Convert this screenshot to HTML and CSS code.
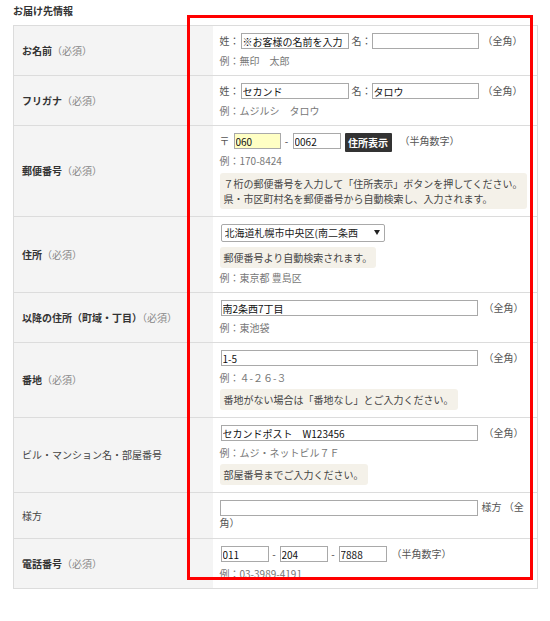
FILE: index.html
```html
<!DOCTYPE html>
<html lang="ja">
<head>
<meta charset="utf-8">
<title>お届け先情報</title>
<link rel="stylesheet" href="styles.css">
</head>
<body>
<div class="page">
  <h2 class="title">お届け先情報</h2>
  <table class="form">
    <colgroup><col class="c1"><col></colgroup>
    <tr>
      <th><b>お名前</b><span class="req">（必須）</span></th>
      <td>
        <div class="line"><span>姓：</span><input class="txt first w108" value="※お客様の名前を入力"><span class="sp">名：</span><input class="txt w107"><span class="hint h4">（全角）</span></div>
        <div class="ex">例：無印　太郎</div>
      </td>
    </tr>
    <tr>
      <th><b>フリガナ</b><span class="req">（必須）</span></th>
      <td>
        <div class="line"><span>姓：</span><input class="txt first w108" value="セカンド"><span class="sp">名：</span><input class="txt w107" value="タロウ"><span class="hint h4">（全角）</span></div>
        <div class="ex">例：ムジルシ　タロウ</div>
      </td>
    </tr>
    <tr>
      <th><b>郵便番号</b><span class="req">（必須）</span></th>
      <td>
        <div class="line"><span>〒</span><input class="txt zip yellow" value="060"><span class="dash d12">-</span><input class="txt w48" value="0062"><button class="btn" type="button">住所表示</button><span class="hint h8">（半角数字）</span></div>
        <div class="ex">例：170-8424</div>
        <div class="note mt5">７桁の郵便番号を入力して「住所表示」ボタンを押してください。<br>県・市区町村名を郵便番号から自動検索し、入力されます。</div>
      </td>
    </tr>
    <tr>
      <th><b>住所</b><span class="req">（必須）</span></th>
      <td>
        <div class="selwrap">
          <select class="sel"><option>北海道札幌市中央区(南二条西</option></select>
          <svg class="arrow" width="6" height="5" viewBox="0 0 6 5"><polygon points="0,0 6,0 3,5" fill="#222"/></svg>
        </div>
        <div class="note mt5">郵便番号より自動検索されます。</div>
        <div class="ex mt3">例：東京都 豊島区</div>
      </td>
    </tr>
    <tr>
      <th><b>以降の住所（町域・丁目）</b><span class="req">（必須）</span></th>
      <td>
        <div class="line"><input class="txt first w257" value="南2条西7丁目"><span class="hint h6">（全角）</span></div>
        <div class="ex">例：東池袋</div>
      </td>
    </tr>
    <tr>
      <th><b>番地</b><span class="req">（必須）</span></th>
      <td>
        <div class="line"><input class="txt first w257" value="1-5"><span class="hint h6">（全角）</span></div>
        <div class="ex">例：４-２６-３</div>
        <div class="note mt4">番地がない場合は「番地なし」とご入力ください。</div>
      </td>
    </tr>
    <tr>
      <th><span class="plain">ビル・マンション名・部屋番号</span></th>
      <td>
        <div class="line"><input class="txt first w257" value="セカンドポスト　W123456"><span class="hint h6">（全角）</span></div>
        <div class="ex">例：ムジ・ネットビル７Ｆ</div>
        <div class="note mt4">部屋番号までご入力ください。</div>
      </td>
    </tr>
    <tr>
      <th><span class="plain">様方</span></th>
      <td class="pb8">
        <div class="flow"><input class="txt w258"><span class="after">様方 （全角）</span></div>
      </td>
    </tr>
    <tr>
      <th><b>電話番号</b><span class="req">（必須）</span></th>
      <td>
        <div class="line"><input class="txt first w48" value="011"><span class="dash d11">-</span><input class="txt w48" value="204"><span class="dash d11">-</span><input class="txt w48" value="7888"><span class="hint h5">（半角数字）</span></div>
        <div class="ex">例：03-3989-4191</div>
      </td>
    </tr>
  </table>
  <div class="highlight"></div>
</div>
</body>
</html>
```

FILE: styles.css
```css
* { box-sizing: border-box; }
html, body { margin: 0; padding: 0; background: #fff; }
body {
  font-family: "Noto Sans CJK JP", "Noto Sans", sans-serif;
  font-size: 10px;
  color: #333;
  width: 550px;
}
.page { position: relative; padding: 4px 12px 0 13px; }
.title {
  margin: 0 0 7px;
  font-size: 10px;
  line-height: 14px;
  font-weight: bold;
  color: #333;
}
.form {
  width: 525px;
  border-collapse: collapse;
  table-layout: fixed;
  border: 1px solid #dcdcdc;
}
.c1 { width: 199px; }
.form th {
  background: #f4f4f4;
  text-align: left;
  font-weight: normal;
  padding: 0 0 0 8px;
  vertical-align: middle;
  border-bottom: 1px solid #dcdcdc;
  line-height: 14px;
  color: #333;
}
.form th b { font-weight: bold; color: #333; }
.form th .plain { color: #444; }
.req { color: #888; }
.form td {
  padding: 7px 8px 7px 7px;
  vertical-align: top;
  border-bottom: 1px solid #dcdcdc;
  background: #fff;
  color: #555;
}
.form td.pb8 { padding-bottom: 8px; }
.line {
  display: flex;
  align-items: flex-start;
  height: 16px;
  line-height: 16px;
  white-space: nowrap;
}
.txt {
  height: 16px;
  border: 1px solid #a9a9a9;
  padding: 0 1px;
  margin: 0;
  font-family: inherit;
  font-size: 10px;
  line-height: 14px;
  color: #111;
  background: #fff;
  border-radius: 0;
  outline: none;
}
.first { margin-left: 1px; }
.w108 { width: 108px; }
.w107 { width: 107px; }
.w48 { width: 48px; }
.w257 { width: 257px; }
.w258 { width: 258px; }
.zip { width: 47px; margin-left: 4px; }
.yellow { background: #ffffc4; }
.sp { margin-left: 3px; }
.hint { color: #555; }
.h4 { margin-left: 4px; }
.h5 { margin-left: 5px; }
.h6 { margin-left: 6px; }
.h8 { margin-left: 8px; }
.dash { text-align: center; color: #444; }
.d12 { width: 12px; }
.d11 { width: 11px; }
.btn {
  margin-left: 4px;
  width: 47px;
  height: 19px;
  padding: 0;
  border: none;
  border-radius: 1px;
  background: #333;
  color: #fff;
  font-family: inherit;
  font-size: 10px;
  font-weight: bold;
  line-height: 19px;
  text-align: center;
}
.ex {
  margin-top: 5px;
  line-height: 14px;
  color: #777;
}
.mt3 { margin-top: 3px; }
.mt4 { margin-top: 4px; }
.mt5 { margin-top: 5px; }
.note {
  width: fit-content;
  background: #f4f1e9;
  border-radius: 3px;
  padding: 3px 4px 3px;
  line-height: 15px;
  color: #444;
  white-space: nowrap;
}
.selwrap {
  position: relative;
  width: 164px;
  height: 18px;
  margin-left: 1px;
}
.sel {
  -webkit-appearance: none;
  appearance: none;
  display: block;
  width: 164px;
  height: 18px;
  margin: 0;
  border: 1px solid #a9a9a9;
  border-radius: 2px;
  padding: 0 18px 0 3px;
  background: #fff;
  font-family: inherit;
  font-size: 10px;
  line-height: 16px;
  color: #222;
}
.arrow {
  position: absolute;
  right: 5px;
  top: 6px;
  pointer-events: none;
}
.flow { line-height: 14px; }
.flow .txt { vertical-align: middle; }
.after { margin-left: 4px; color: #555; }
.highlight {
  position: absolute;
  left: 187px;
  top: 15px;
  width: 346px;
  height: 565px;
  border: 3px solid #ff0000;
  pointer-events: none;
}
```
